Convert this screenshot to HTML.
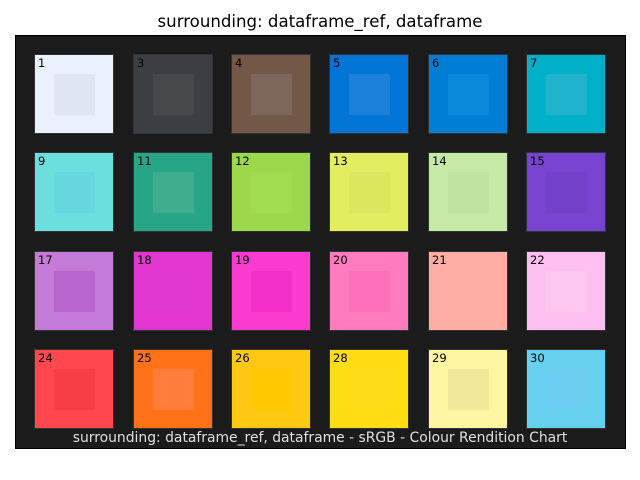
<!DOCTYPE html>
<html><head><style>
body{margin:0;width:640px;height:480px;background:#fff;position:relative;overflow:hidden;font-family:"DejaVu Sans","Liberation Sans",sans-serif}
.t{position:absolute;top:12px;left:0;width:640px;text-align:center;font-size:16.6px;color:#000}
.ax{position:absolute;left:15px;top:35px;width:611px;height:414px;background:#1b1b1b;border:1px solid #000;box-sizing:border-box}
.s{position:absolute;width:80px;height:80px;box-sizing:border-box;border:1px solid #333}
.s i{position:absolute;left:19px;top:19px;width:41px;height:41px}
.s b{position:absolute;left:3px;top:1px;font-weight:normal;font-size:11.5px;color:#000}
.c{position:absolute;left:0;width:640px;top:430px;text-align:center;font-size:13.9px;color:#e0e0e0}
</style></head><body>
<div class="t">surrounding: dataframe_ref, dataframe</div>
<div class="ax"></div>
<div class="c">surrounding: dataframe_ref, dataframe - sRGB - Colour Rendition Chart</div>
<div class="s" style="left:34px;top:54px;background:#eaf1fc"><i style="background:#dde6f1"></i><b>1</b></div>
<div class="s" style="left:133px;top:54px;background:#3b3f44"><i style="background:#46484c"></i><b>3</b></div>
<div class="s" style="left:231px;top:54px;background:#735848"><i style="background:#7d665b"></i><b>4</b></div>
<div class="s" style="left:329px;top:54px;background:#0075d5"><i style="background:#1a80d8"></i><b>5</b></div>
<div class="s" style="left:428px;top:54px;background:#007dd4"><i style="background:#0a88d9"></i><b>6</b></div>
<div class="s" style="left:526px;top:54px;background:#00b0c8"><i style="background:#22b3cc"></i><b>7</b></div>
<div class="s" style="left:34px;top:152px;background:#6bdfde"><i style="background:#66d6df"></i><b>9</b></div>
<div class="s" style="left:133px;top:152px;background:#27a587"><i style="background:#40ae8e"></i><b>11</b></div>
<div class="s" style="left:231px;top:152px;background:#9cd84c"><i style="background:#a0db50"></i><b>12</b></div>
<div class="s" style="left:329px;top:152px;background:#e2ee60"><i style="background:#dbe85c"></i><b>13</b></div>
<div class="s" style="left:428px;top:152px;background:#c5eaa8"><i style="background:#bde5a0"></i><b>14</b></div>
<div class="s" style="left:526px;top:152px;background:#7843d0"><i style="background:#7340c8"></i><b>15</b></div>
<div class="s" style="left:34px;top:251px;background:#c47ad8"><i style="background:#b866cc"></i><b>17</b></div>
<div class="s" style="left:133px;top:251px;background:#e136d0"><i style="background:#e038d0"></i><b>18</b></div>
<div class="s" style="left:231px;top:251px;background:#fb3ad0"><i style="background:#f530c8"></i><b>19</b></div>
<div class="s" style="left:329px;top:251px;background:#ff7bbf"><i style="background:#fb70b8"></i><b>20</b></div>
<div class="s" style="left:428px;top:251px;background:#ffaea6"><i style="background:#ffaea6"></i><b>21</b></div>
<div class="s" style="left:526px;top:251px;background:#fdbff0"><i style="background:#fdc6f0"></i><b>22</b></div>
<div class="s" style="left:34px;top:349px;background:#ff474d"><i style="background:#f53e43"></i><b>24</b></div>
<div class="s" style="left:133px;top:349px;background:#ff7218"><i style="background:#ff7d38"></i><b>25</b></div>
<div class="s" style="left:231px;top:349px;background:#ffc813"><i style="background:#ffc800"></i><b>26</b></div>
<div class="s" style="left:329px;top:349px;background:#ffdd12"><i style="background:#ffdc1a"></i><b>28</b></div>
<div class="s" style="left:428px;top:349px;background:#fff6a2"><i style="background:#f1e99a"></i><b>29</b></div>
<div class="s" style="left:526px;top:349px;background:#66d0ef"><i style="background:#6ccdf0"></i><b>30</b></div>
</body></html>
